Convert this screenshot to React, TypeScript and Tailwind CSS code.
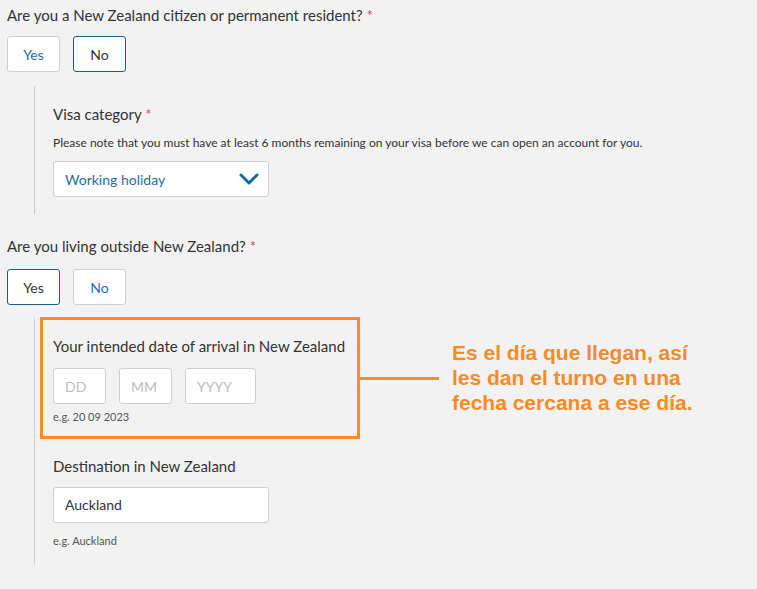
import { useState } from 'react';

const font = { fontFamily: 'Lato, "Open Sans", sans-serif' };

const Required = () => <span className="text-[#e0474c]"> *</span>;

const Toggle = ({ value, onChange }: { value: string; onChange: (v: string) => void }) => (
  <div className="flex gap-[13px]">
    {['Yes', 'No'].map((opt) => (
      <button
        key={opt}
        onClick={() => onChange(opt)}
        className={
          'w-[53px] h-[36px] rounded-[3px] bg-white text-[14px] ' +
          (value === opt
            ? 'border border-[#1b5e7e] text-[#333]'
            : 'border border-[#d0d0d0] text-[#1e6ea3]')
        }
      >
        {opt}
      </button>
    ))}
  </div>
);

export default function App() {
  const [citizen, setCitizen] = useState('No');
  const [outside, setOutside] = useState('Yes');

  return (
    <div className="min-h-screen bg-[#f2f2f2] pl-[7px] pt-[5px] text-[#333]" style={font}>
      <h2 className="text-[15px] leading-[20px]">
        Are you a New Zealand citizen or permanent resident?<Required />
      </h2>
      <div className="mt-[11px]">
        <Toggle value={citizen} onChange={setCitizen} />
      </div>

      {/* visa details */}
      <div className="ml-[27px] mt-[14px] border-l border-[#cfcfcf] pl-[18px] pt-[18px] pb-[17px]">
        <h3 className="text-[15px] leading-[20px]">
          Visa category<Required />
        </h3>
        <p className="text-[12px] leading-[16px] mt-[11px]">
          Please note that you must have at least 6 months remaining on your visa before we can open an account for you.
        </p>
        <div className="mt-[10px] w-[216px] h-[36px] bg-white border border-[#d0d0d0] rounded-[3px] flex items-center justify-between pl-[11px] pr-[9px]">
          <span className="text-[14px] text-[#1e6ea3]">Working holiday</span>
          <svg width="20" height="12" viewBox="0 0 20 12" fill="none">
            <path d="M2 2l8 8 8-8" stroke="#1668a0" strokeWidth="3" strokeLinecap="round" strokeLinejoin="round" />
          </svg>
        </div>
      </div>

      <h2 className="text-[15px] leading-[20px] mt-[22px]">
        Are you living outside New Zealand?<Required />
      </h2>
      <div className="mt-[13px]">
        <Toggle value={outside} onChange={setOutside} />
      </div>

      {/* arrival details */}
      <div className="ml-[27px] mt-[12px] border-l border-[#cfcfcf] pl-[5px] pb-[16px] w-[700px]">
        <div className="relative">
          <div className="w-[320px] border-[3px] border-[#f68b27] pl-[10px] pt-[16px] pb-[10px]">
            <h3 className="text-[15px] leading-[20px]">Your intended date of arrival in New Zealand</h3>
            <div className="flex gap-[13px] mt-[12px]">
              <input placeholder="DD" className="w-[53px] h-[36px] bg-white border border-[#d0d0d0] rounded-[3px] px-[11px] text-[14px] placeholder:text-[#bdbdbd] outline-none" />
              <input placeholder="MM" className="w-[53px] h-[36px] bg-white border border-[#d0d0d0] rounded-[3px] px-[11px] text-[14px] placeholder:text-[#bdbdbd] outline-none" />
              <input placeholder="YYYY" className="w-[71px] h-[36px] bg-white border border-[#d0d0d0] rounded-[3px] px-[11px] text-[14px] placeholder:text-[#bdbdbd] outline-none" />
            </div>
            <p className="text-[11px] text-[#555] mt-[5px]">e.g. 20 09 2023</p>
          </div>
          {/* callout */}
          <div className="absolute left-[320px] top-[60px] w-[79px] h-[3px] bg-[#f68b27]" />
          <p
            className="absolute left-[412px] top-[23px] text-[21px] leading-[25px] font-bold text-[#f68b27] whitespace-nowrap"
            style={{ fontFamily: '"Liberation Sans", Arial, sans-serif' }}
          >
            Es el día que llegan, así
            <br />
            les dan el turno en una
            <br />
            fecha cercana a ese día.
          </p>
        </div>

        <div className="pl-[13px] pt-[17px]">
          <h3 className="text-[15px] leading-[20px]">Destination in New Zealand</h3>
          <input
            defaultValue="Auckland"
            className="mt-[11px] w-[216px] h-[36px] bg-white border border-[#d0d0d0] rounded-[3px] px-[11px] text-[14px] text-[#333] outline-none"
          />
          <p className="text-[11px] text-[#555] mt-[10px]">e.g. Auckland</p>
        </div>
      </div>
    </div>
  );
}
